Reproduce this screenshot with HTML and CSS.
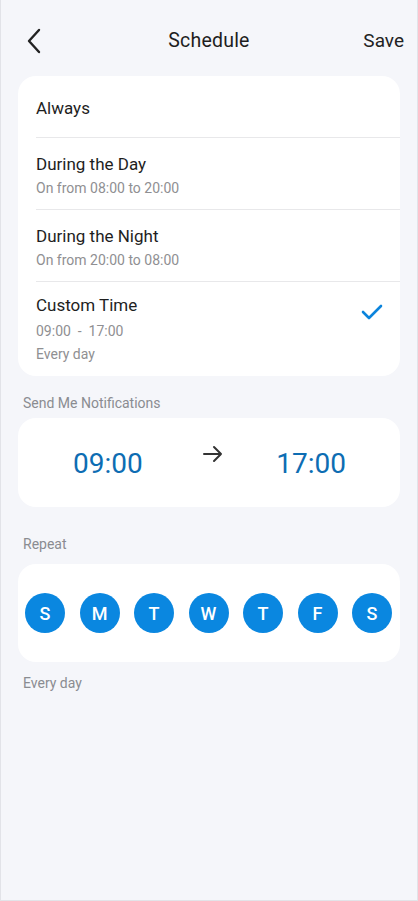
FILE: index.html
```html
<!DOCTYPE html>
<html>
<head>
    <title>Schedule</title>
    <link rel="stylesheet" href="styles.css">
</head>
<body>
<div class="screen">
    <div class="top-bar">
        <div class="back">
            <svg width="16" height="26" viewBox="0 0 16 26"><path d="M13 2 L3 13 L13 24" fill="none" stroke="#222" stroke-width="2.4" stroke-linecap="round" stroke-linejoin="round"/></svg>
        </div>
        <div class="title">Schedule</div>
        <div class="save">Save</div>
    </div>

    <div class="card mode-list">
        <div class="mode-item single">
            <div class="mode-name">Always</div>
        </div>
        <div class="mode-item">
            <div class="mode-name">During the Day</div>
            <div class="mode-sub">On from 08:00 to 20:00</div>
        </div>
        <div class="mode-item">
            <div class="mode-name">During the Night</div>
            <div class="mode-sub">On from 20:00 to 08:00</div>
        </div>
        <div class="mode-item selected">
            <div class="mode-info">
                <div class="mode-name">Custom Time</div>
                <div class="mode-sub first">09:00 &nbsp;-&nbsp; 17:00</div>
                <div class="mode-sub">Every day</div>
            </div>
            <div class="mode-check">
                <svg width="22" height="16" viewBox="0 0 22 16"><path d="M2 8 L8 14 L20 2" fill="none" stroke="#0b84dc" stroke-width="2.6" stroke-linecap="round" stroke-linejoin="round"/></svg>
            </div>
        </div>
    </div>

    <div class="section-label">Send Me Notifications</div>
    <div class="card time-range">
        <div class="time">09:00</div>
        <div class="arrow">
            <svg width="20" height="18" viewBox="0 0 20 18"><path d="M1 9 H18 M11 2 L18 9 L11 16" fill="none" stroke="#333" stroke-width="2" stroke-linecap="round" stroke-linejoin="round"/></svg>
        </div>
        <div class="time">17:00</div>
    </div>

    <div class="section-label repeat-label">Repeat</div>
    <div class="card days">
        <div class="day">S</div>
        <div class="day">M</div>
        <div class="day">T</div>
        <div class="day">W</div>
        <div class="day">T</div>
        <div class="day">F</div>
        <div class="day">S</div>
    </div>
    <div class="section-note">Every day</div>
</div>
</body>
</html>
```

FILE: styles.css
```css
* {
    box-sizing: border-box;
}
html, body {
    margin: 0;
    padding: 0;
}
body {
    font-family: Roboto, "Noto Sans", sans-serif;
    color: #1e1e1e;
    background: #f5f6fa;
}
.screen {
    width: 418px;
    height: 901px;
    background: #f5f6fa;
    border: 1px solid #e2e3e8;
    border-top: none;
    padding: 0 17px;
}
.top-bar {
    display: flex;
    align-items: center;
    justify-content: space-between;
    height: 76px;
    padding: 5px 0 0 8px;
}
.back {
    width: 60px;
    display: flex;
    align-items: center;
    padding-top: 1px;
}
.title {
    font-size: 19.5px;
    color: #1e1e1e;
    letter-spacing: 0.2px;
}
.save {
    width: 72px;
    text-align: right;
    font-size: 19px;
    color: #222;
    margin-right: -4px;
}
.card {
    background: #fff;
    border-radius: 18px;
}
.mode-list {
    padding-left: 18px;
}
.mode-item {
    display: flex;
    flex-direction: column;
    justify-content: center;
    height: 72px;
    padding-top: 4px;
    border-bottom: 1px solid #e8e8ea;
}
.mode-item.single {
    height: 62px;
    padding-top: 2px;
}
.mode-item.selected {
    flex-direction: row;
    align-items: center;
    justify-content: space-between;
    height: 94px;
    border-bottom: none;
    padding-top: 2px;
    padding-bottom: 2px;
}
.mode-name {
    font-size: 17px;
    line-height: 24px;
}
.mode-sub {
    font-size: 14px;
    line-height: 22px;
    color: #8f8f92;
    margin-top: 1px;
}
.mode-sub.first {
    margin-top: 3px;
}
.mode-check {
    padding-right: 17px;
    margin-top: -30px;
}
.section-label {
    font-size: 14px;
    line-height: 16px;
    color: #8a8c91;
    padding: 19px 0 7px 5px;
}
.repeat-label {
    padding: 29px 0 12px 5px;
}
.section-note {
    font-size: 14px;
    line-height: 16px;
    color: #8a8c91;
    padding: 13px 0 0 5px;
}
.time-range {
    height: 89px;
    display: flex;
    align-items: center;
    justify-content: space-between;
    padding: 0 54px 0 55px;
}
.time {
    font-size: 28px;
    color: #0d6db3;
    padding-top: 2px;
}
.arrow {
    margin-top: -14px;
    padding-left: 6px;
}
.days {
    height: 98px;
    display: flex;
    align-items: center;
    justify-content: space-between;
    padding: 0 8px 0 7px;
}
.day {
    width: 40px;
    height: 40px;
    border-radius: 50%;
    background: #0a87e0;
    color: #fff;
    display: flex;
    align-items: center;
    justify-content: center;
    font-size: 18px;
    font-weight: 500;
}
```
